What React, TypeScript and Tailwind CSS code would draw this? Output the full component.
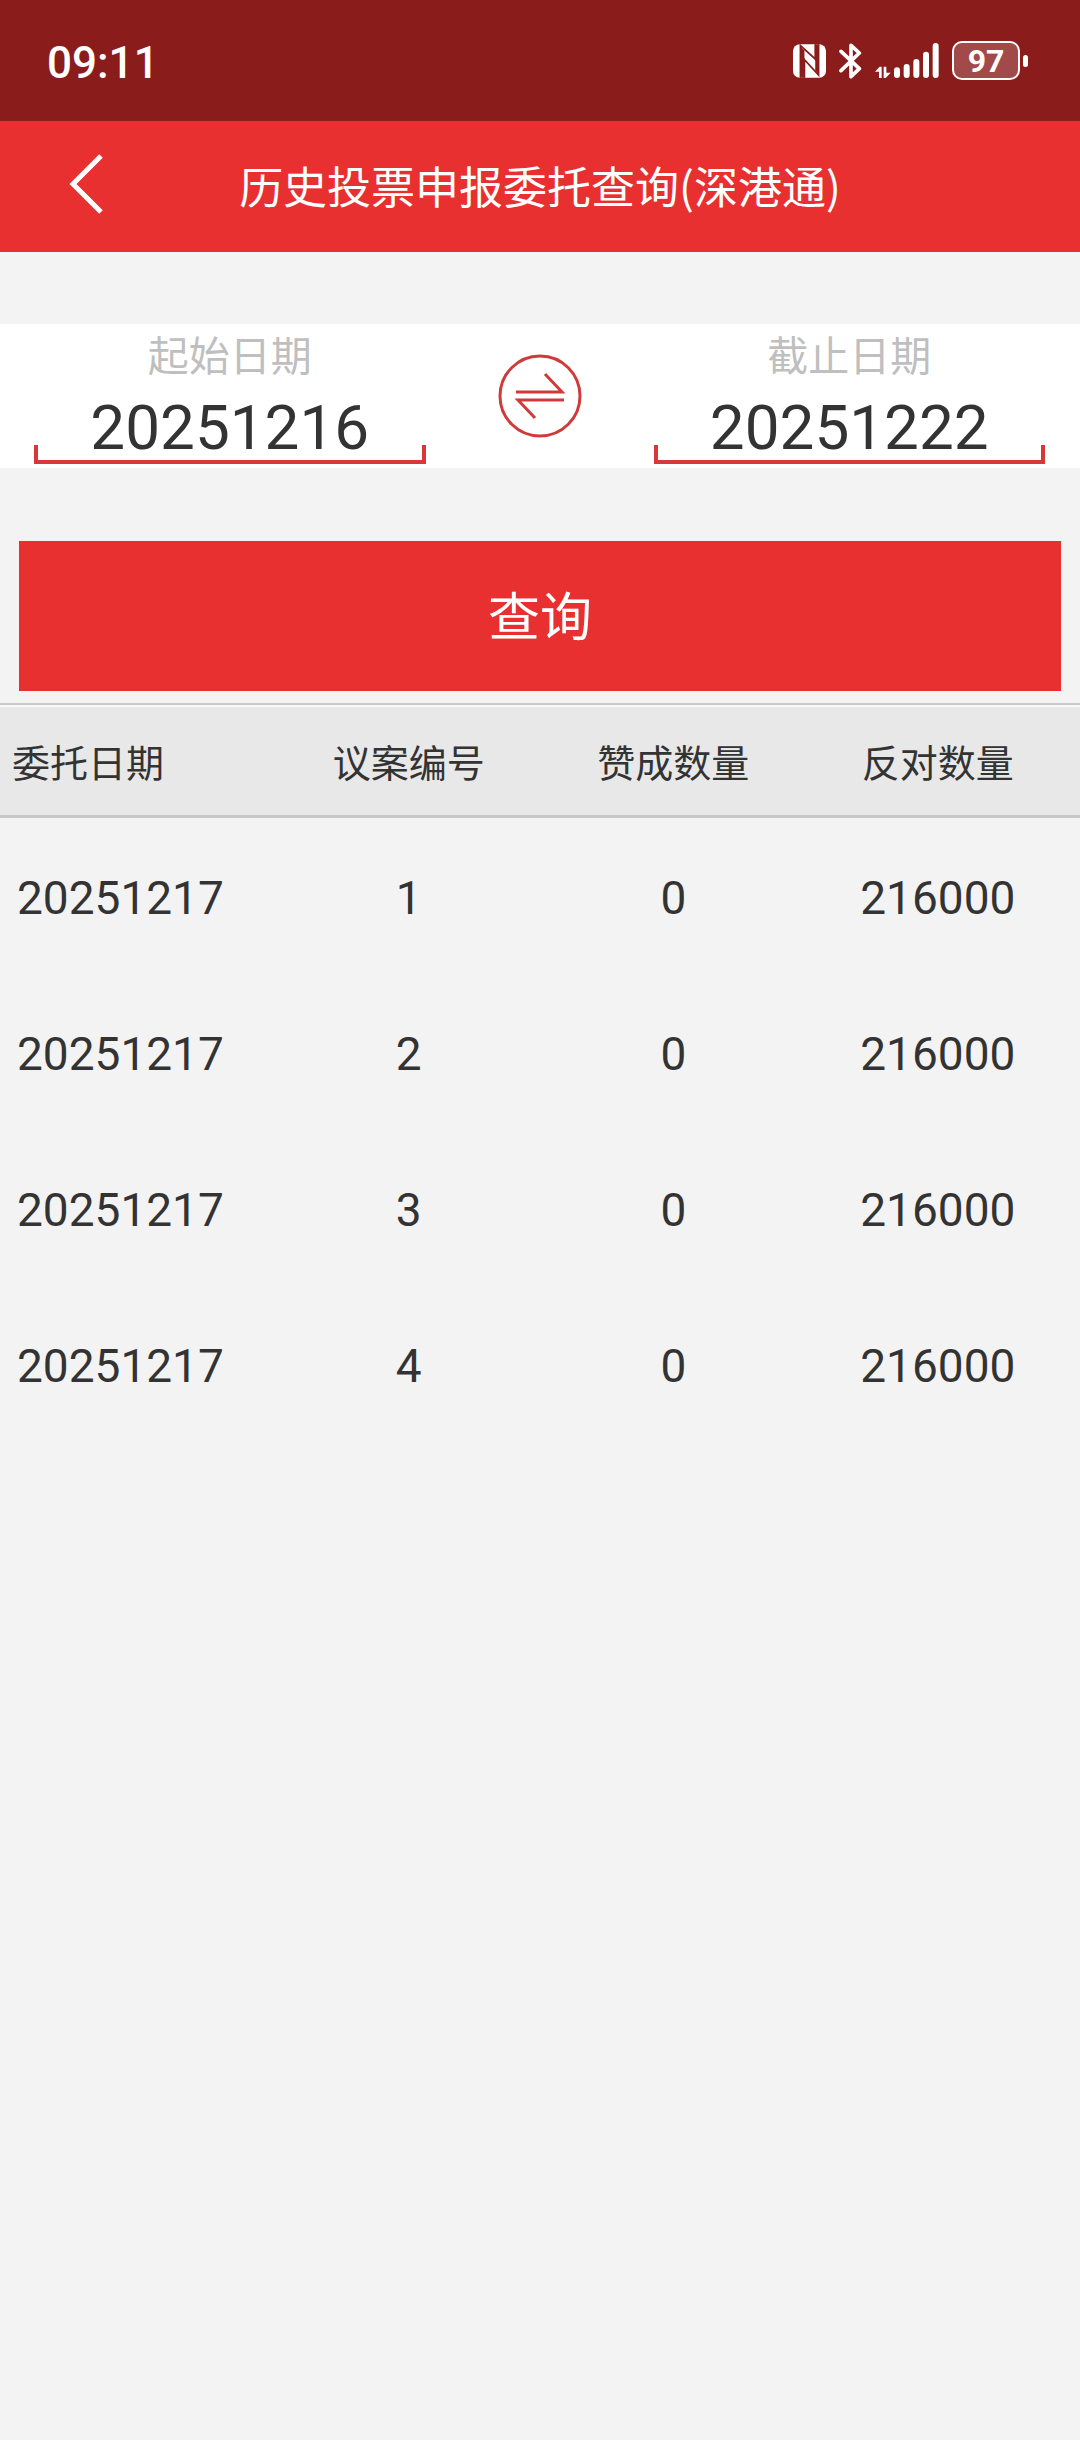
import React, { useState } from "react";

type Row = {
  date: string;
  proposal: string;
  approve: string;
  against: string;
};

const rows: Row[] = [
  { date: "20251217", proposal: "1", approve: "0", against: "216000" },
  { date: "20251217", proposal: "2", approve: "0", against: "216000" },
  { date: "20251217", proposal: "3", approve: "0", against: "216000" },
  { date: "20251217", proposal: "4", approve: "0", against: "216000" },
];

const NfcIcon = () => (
  <svg width="33" height="34" viewBox="0 0 98 100" fill="none" aria-hidden="true">
    <rect width="98" height="100" rx="20" fill="#fff" />
    <path d="M22 100V4L66 44V0" stroke="#8a1c1b" strokeWidth="5" />
    <path d="M34 100V46L76 92V0" stroke="#8a1c1b" strokeWidth="5" />
    <path d="M24 10L34 19V100H22V10Z" fill="#8a1c1b" />
    <path d="M66 0H76V88L66 79Z" fill="#8a1c1b" />
  </svg>
);

const BluetoothIcon = () => (
  <svg width="23" height="36" viewBox="0 0 69 108" fill="none" aria-hidden="true">
    <path
      d="M6 25L61 77L36 101V7L61 30L6 83"
      stroke="#fff"
      strokeWidth="11"
      strokeLinecap="round"
      strokeLinejoin="round"
    />
  </svg>
);

const SignalIcon = () => (
  <svg width="64" height="35" viewBox="0 0 192 105" fill="#fff" aria-hidden="true">
    <path d="M0 86L14 71H20V105H12V86Z" />
    <path d="M26 71H34V89H47L32 105H26Z" />
    <rect x="57" y="73" width="18" height="32" rx="9" />
    <rect x="86" y="63" width="18" height="42" rx="9" />
    <rect x="115" y="48" width="18" height="57" rx="9" />
    <rect x="144" y="26" width="18" height="79" rx="9" />
    <rect x="173" y="0" width="18" height="105" rx="9" />
  </svg>
);

// StatusBar Component
const StatusBar = () => (
  <div className="flex h-[121px] items-center justify-between bg-[#8a1c1b] pl-[47px] pr-[52px] font-['Roboto',sans-serif] text-white">
    <span className="pt-1 text-[44px] font-medium">09:11</span>
    <div className="flex items-center gap-[13px]">
      <NfcIcon />
      <BluetoothIcon />
      <SignalIcon />
      <div className="flex items-center gap-[3px]">
        <span className="flex h-[39px] w-[68px] items-center justify-center rounded-[10px] border-2 border-white bg-[#a24a4a] text-[32px] font-bold">
          97
        </span>
        <span className="h-3 w-[5px] rounded-sm bg-white" />
      </div>
    </div>
  </div>
);

// Header Component
const Header = () => (
  <header className="grid h-[131px] grid-cols-[1fr_auto_1fr] items-center bg-[#e83030] text-white">
    <button type="button" aria-label="返回" className="ml-[67px] w-fit pb-1.5">
      <svg width="38" height="62" viewBox="0 0 38 62" fill="none">
        <path d="M34 3L6 31L34 59" stroke="#fff" strokeWidth="5" />
      </svg>
    </button>
    <h1 className="pb-1 text-[44px]">历史投票申报委托查询(深港通)</h1>
  </header>
);

type DateFieldProps = {
  id: string;
  label: string;
  value: string;
  onChange: (value: string) => void;
};

// DateField Component
const DateField: React.FC<DateFieldProps> = ({ id, label, value, onChange }) => (
  <div className="relative flex min-w-0 flex-1 flex-col">
    <label htmlFor={id} className="h-[62px] text-center text-[41px] leading-[58px] text-[#bfbfbf]">
      {label}
    </label>
    <input
      id={id}
      type="text"
      value={value}
      onChange={(e) => onChange(e.target.value)}
      className="h-[78px] w-full bg-transparent pt-1 text-center font-['Roboto',sans-serif] text-[62px] text-[#333] outline-none"
    />
    {/* Bracket under the value */}
    <span className="pointer-events-none absolute inset-x-0 bottom-0 h-[19px] border-x-4 border-b-4 border-[#d83838]" />
  </div>
);

const App: React.FC = () => {
  const [start, setStart] = useState("20251216");
  const [end, setEnd] = useState("20251222");

  const swapDates = () => {
    setStart(end);
    setEnd(start);
  };

  return (
    <div className="min-h-screen bg-[#f3f3f3] font-['Noto_Sans_CJK_SC',sans-serif] text-[#333]">
      <StatusBar />
      <Header />

      <main>
        <form onSubmit={(e) => e.preventDefault()}>
          {/* Date range */}
          <div className="mt-[72px] flex items-center gap-[72px] bg-white pb-1 pl-[34px] pr-[35px]">
            <DateField id="start" label="起始日期" value={start} onChange={setStart} />
            <button type="button" aria-label="交换日期" onClick={swapDates} className="pt-1">
              <svg width="84" height="84" viewBox="0 0 84 84" fill="none" stroke="#cf3b3b">
                <circle cx="42" cy="42" r="40" strokeWidth="3" />
                <path d="M18 38H64L47 20" strokeWidth="3" />
                <path d="M66 46H20L37 64" strokeWidth="3" />
              </svg>
            </button>
            <DateField id="end" label="截止日期" value={end} onChange={setEnd} />
          </div>

          <div className="px-[19px] pt-[73px]">
            <button type="submit" className="h-[150px] w-full bg-[#e83030] pb-1 text-[52px] text-white">
              查询
            </button>
          </div>
        </form>

        {/* Results */}
        <div className="mt-3 border-t-2 border-[#c9c9c9]">
          <table className="w-full table-fixed border-collapse">
            <colgroup>
              <col className="w-[25.6%]" />
              <col className="w-[24.5%]" />
              <col className="w-[24.5%]" />
              <col />
            </colgroup>
            <thead className="border-b-3 border-t-2 border-b-[#c9c9c9] border-t-[#f8f8f8] bg-[#e8e8e8] text-[38px]">
              <tr className="h-[110px]">
                <th className="pl-3 text-left font-normal">委托日期</th>
                <th className="font-normal">议案编号</th>
                <th className="font-normal">赞成数量</th>
                <th className="pr-2.5 font-normal">反对数量</th>
              </tr>
            </thead>
            <tbody className="font-['Roboto',sans-serif] text-[46px]">
              {rows.map((row) => (
                <tr key={row.proposal} className="h-[156px] text-center">
                  <td className="pl-[17px] pt-2 text-left">{row.date}</td>
                  <td className="pt-2">{row.proposal}</td>
                  <td className="pt-2">{row.approve}</td>
                  <td className="pr-2.5 pt-2">{row.against}</td>
                </tr>
              ))}
            </tbody>
          </table>
        </div>
      </main>
    </div>
  );
};

export default App;
